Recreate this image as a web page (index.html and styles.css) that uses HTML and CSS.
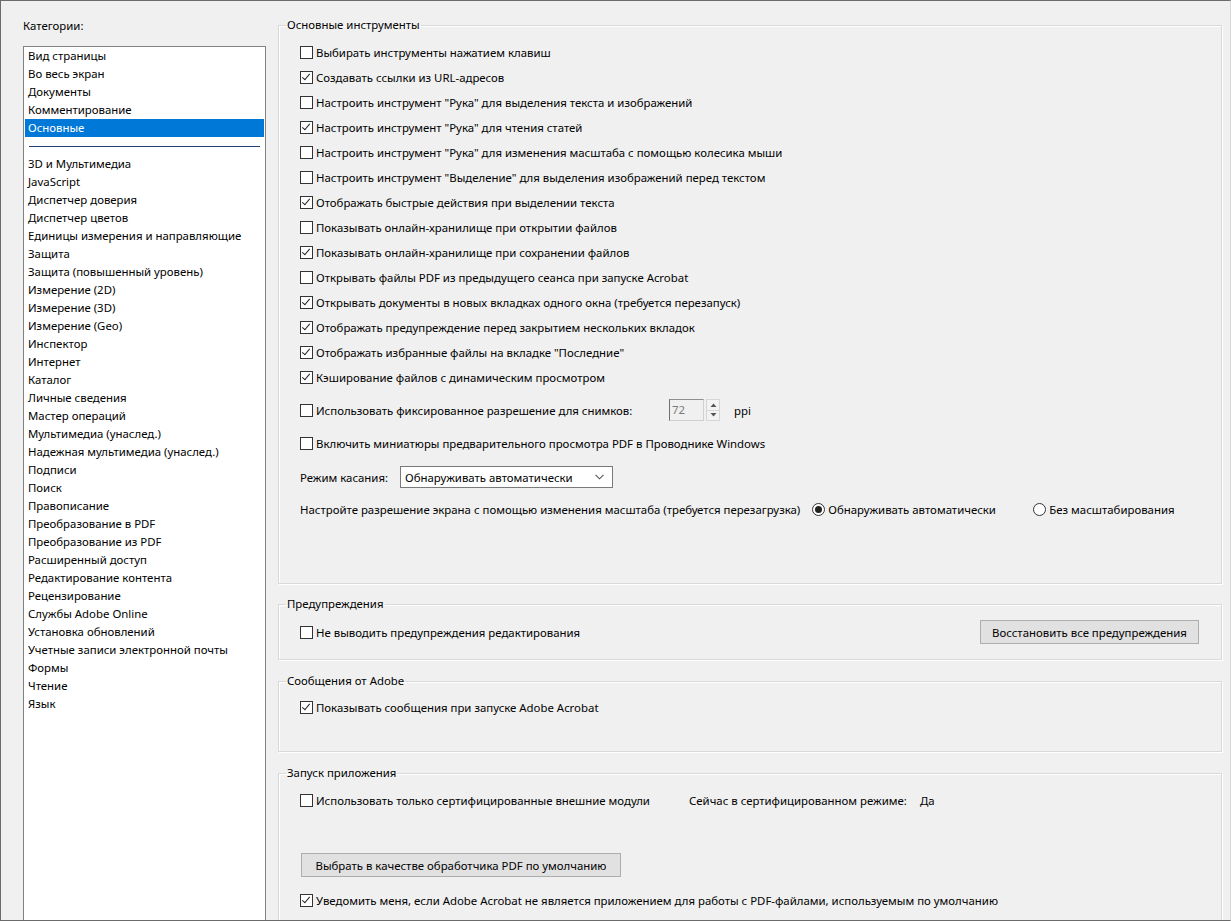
FILE: index.html
```html
<!DOCTYPE html>
<html lang="ru">

<head>
  <meta charset="UTF-8">
  <meta name="viewport" content="width=device-width, initial-scale=1.0">
  <title>Установки</title>
  <link rel="stylesheet" href="styles.css">
</head>

<body>
  <div class="window">
    <div class="sidebar">
      <div class="cat-title">Категории:</div>
      <ul class="cat-list">
        <li>Вид страницы</li>
        <li>Во весь экран</li>
        <li>Документы</li>
        <li>Комментирование</li>
        <li class="selected">Основные</li>
        <li class="sep"></li>
        <li>3D и Мультимедиа</li>
        <li>JavaScript</li>
        <li>Диспетчер доверия</li>
        <li>Диспетчер цветов</li>
        <li>Единицы измерения и направляющие</li>
        <li>Защита</li>
        <li>Защита (повышенный уровень)</li>
        <li>Измерение (2D)</li>
        <li>Измерение (3D)</li>
        <li>Измерение (Geo)</li>
        <li>Инспектор</li>
        <li>Интернет</li>
        <li>Каталог</li>
        <li>Личные сведения</li>
        <li>Мастер операций</li>
        <li>Мультимедиа (унаслед.)</li>
        <li>Надежная мультимедиа (унаслед.)</li>
        <li>Подписи</li>
        <li>Поиск</li>
        <li>Правописание</li>
        <li>Преобразование в PDF</li>
        <li>Преобразование из PDF</li>
        <li>Расширенный доступ</li>
        <li>Редактирование контента</li>
        <li>Рецензирование</li>
        <li>Службы Adobe Online</li>
        <li>Установка обновлений</li>
        <li>Учетные записи электронной почты</li>
        <li>Формы</li>
        <li>Чтение</li>
        <li>Язык</li>
      </ul>
    </div>

    <div class="main">
      <fieldset class="group">
        <legend>Основные инструменты</legend>
        <div class="group-body body-tools">
          <div class="row"><span class="cb"></span>Выбирать инструменты нажатием клавиш</div>
          <div class="row"><span class="cb on"></span>Создавать ссылки из URL-адресов</div>
          <div class="row"><span class="cb"></span>Настроить инструмент "Рука" для выделения текста и изображений</div>
          <div class="row"><span class="cb on"></span>Настроить инструмент "Рука" для чтения статей</div>
          <div class="row"><span class="cb"></span>Настроить инструмент "Рука" для изменения масштаба с помощью колесика мыши</div>
          <div class="row"><span class="cb"></span>Настроить инструмент "Выделение" для выделения изображений перед текстом</div>
          <div class="row"><span class="cb on"></span>Отображать быстрые действия при выделении текста</div>
          <div class="row"><span class="cb"></span>Показывать онлайн-хранилище при открытии файлов</div>
          <div class="row"><span class="cb on"></span>Показывать онлайн-хранилище при сохранении файлов</div>
          <div class="row"><span class="cb"></span>Открывать файлы PDF из предыдущего сеанса при запуске Acrobat</div>
          <div class="row"><span class="cb on"></span>Открывать документы в новых вкладках одного окна (требуется перезапуск)</div>
          <div class="row"><span class="cb on"></span>Отображать предупреждение перед закрытием нескольких вкладок</div>
          <div class="row"><span class="cb on"></span>Отображать избранные файлы на вкладке "Последние"</div>
          <div class="row"><span class="cb on"></span>Кэширование файлов с динамическим просмотром</div>

          <div class="row row-tall row-ppi">
            <span class="cb"></span><span class="ppi-label">Использовать фиксированное разрешение для снимков:</span>
            <span class="spin-input">72</span>
            <span class="spin-btns">
              <span class="spin-btn"><svg width="7" height="4" viewBox="0 0 7 4"><path d="M0.5 4 L3.5 0.5 L6.5 4 Z" fill="#555"/></svg></span>
              <span class="spin-btn"><svg width="7" height="4" viewBox="0 0 7 4"><path d="M0.5 0 L3.5 3.5 L6.5 0 Z" fill="#555"/></svg></span>
            </span>
            <span class="ppi">ppi</span>
          </div>
          <div class="row row-tall row-thumbs"><span class="cb"></span>Включить миниатюры предварительного просмотра PDF в Проводнике Windows</div>
          <div class="row row-tall row-touch">
            <span class="touch-label">Режим касания:</span>
            <span class="select">
              <span class="select-text">Обнаруживать автоматически</span>
              <svg width="9" height="6" viewBox="0 0 9 6"><path d="M0.5 0.8 L4.5 4.8 L8.5 0.8" fill="none" stroke="#555" stroke-width="1.1"/></svg>
            </span>
          </div>
          <div class="row row-tall row-scale">
            <span class="scale-label">Настройте разрешение экрана с помощью изменения масштаба (требуется перезагрузка)</span>
            <span class="radio-opt radio-first"><span class="rb on"></span>Обнаруживать автоматически</span>
            <span class="radio-opt"><span class="rb"></span>Без масштабирования</span>
          </div>
        </div>
      </fieldset>

      <fieldset class="group group-warn">
        <legend>Предупреждения</legend>
        <div class="group-body body-warn">
          <div class="row row-split">
            <span class="row-left"><span class="cb"></span>Не выводить предупреждения редактирования</span>
            <button class="btn btn-restore">Восстановить все предупреждения</button>
          </div>
        </div>
      </fieldset>

      <fieldset class="group group-msg">
        <legend>Сообщения от Adobe</legend>
        <div class="group-body body-msg">
          <div class="row"><span class="cb on"></span>Показывать сообщения при запуске Adobe Acrobat</div>
        </div>
      </fieldset>

      <fieldset class="group group-launch">
        <legend>Запуск приложения</legend>
        <div class="group-body body-launch">
          <div class="row">
            <span class="cb"></span><span class="cert-label">Использовать только сертифицированные внешние модули</span>
            <span class="cert-mode">Сейчас в сертифицированном режиме:</span>
            <span>Да</span>
          </div>
          <button class="btn btn-default">Выбрать в качестве обработчика PDF по умолчанию</button>
          <div class="row row-notify"><span class="cb on"></span>Уведомить меня, если Adobe Acrobat не является приложением для работы с PDF-файлами, используемым по умолчанию</div>
        </div>
      </fieldset>
    </div>
  </div>
</body>

</html>
```

FILE: styles.css
```css
body {
  margin: 0;
  background-color: #f0f0f0;
  font-family: "Noto Sans", "Open Sans", sans-serif;
  font-size: 11.4px;
  color: #000;
}

.window {
  width: 1231px;
  height: 921px;
  box-sizing: border-box;
  border: 1px solid #6b6b6b;
  border-right-color: #d8d8d8;
  display: flex;
  overflow: hidden;
}

/* left column */
.sidebar {
  width: 243px;
  padding: 17px 0 0 22px;
  display: flex;
  flex-direction: column;
}

.cat-title {
  line-height: 16px;
}

.cat-list {
  flex: 1;
  list-style: none;
  margin: 12px 0 -1px 0;
  padding: 0 1px 1px 1px;
  background-color: #fff;
  border: 1px solid #828282;
}

.cat-list li {
  height: 18px;
  line-height: 18px;
  padding-left: 3px;
  white-space: nowrap;
}

.cat-list .selected {
  background-color: #0078d7;
  color: #fff;
}

.cat-list .sep {
  box-sizing: border-box;
  padding: 9px 4px 0 4px;
}

.cat-list .sep::after {
  content: "";
  display: block;
  border-top: 1px solid #24406e;
}

/* right column */
.main {
  margin-left: 12px;
  padding-top: 16px;
  width: 944px;
}

.group {
  margin: 0;
  padding: 0;
  border: 1px solid #d9d9d9;
  box-shadow: inset 1px 1px 0 #fff, 1px 1px 0 #fff;
  min-width: 0;
}

.group legend {
  margin-left: 7px;
  padding: 0 1px;
  line-height: 16px;
}

.group-body {
  box-sizing: border-box;
  padding-left: 21px;
  padding-right: 22px;
}

.body-tools {
  height: 550px;
  padding-top: 7px;
}

.group-warn {
  margin-top: 12px;
}

.body-warn {
  height: 47px;
  padding-top: 8px;
}

.group-msg {
  margin-top: 13px;
}

.body-msg {
  height: 62px;
  padding-top: 6px;
}

.group-launch {
  margin-top: 13px;
}

.body-launch {
  height: 200px;
  padding-top: 7px;
}

.row {
  height: 25px;
  display: flex;
  align-items: center;
  white-space: nowrap;
}

.row-tall {
  height: 24px;
}

.row-ppi {
  margin-top: 8px;
}

.row-thumbs {
  margin-top: 9px;
}

.row-touch {
  margin-top: 10px;
}

.row-scale {
  margin-top: 8px;
}

/* checkbox */
.cb {
  width: 11px;
  height: 11px;
  border: 1px solid #333;
  background-color: #fff;
  margin-right: 3px;
  flex-shrink: 0;
  position: relative;
}

.cb.on::after {
  content: "";
  position: absolute;
  left: 3px;
  top: 0px;
  width: 3px;
  height: 7px;
  border: solid #222;
  border-width: 0 1.3px 1.3px 0;
  transform: rotate(40deg);
}

/* radio */
.rb {
  width: 11px;
  height: 11px;
  border: 1px solid #333;
  border-radius: 50%;
  background-color: #fff;
  margin-right: 3px;
  position: relative;
}

.rb.on::after {
  content: "";
  position: absolute;
  left: 2px;
  top: 2px;
  width: 7px;
  height: 7px;
  border-radius: 50%;
  background-color: #222;
}

.radio-opt {
  display: flex;
  align-items: center;
}

.scale-label {
  margin-right: 12px;
}

.radio-first {
  width: 221px;
}

/* spinner */
.ppi-label {
  width: 353px;
}

.spin-input {
  width: 31px;
  height: 20px;
  line-height: 20px;
  padding-left: 2px;
  border: 1px solid #cfcfcf;
  border-left-color: #6f6f6f;
  border-top-color: #8f8f8f;
  background-color: #f0f0f0;
  color: #7a7a7a;
}

.spin-btns {
  display: flex;
  flex-direction: column;
  margin-left: 2px;
  width: 14px;
  height: 22px;
  box-sizing: border-box;
  border: 1px solid #d6d6d6;
}

.spin-btn {
  flex: 1;
  display: flex;
  align-items: center;
  justify-content: center;
  background-color: #f3f3f3;
}

.spin-btn + .spin-btn {
  border-top: 1px solid #d6d6d6;
}

.ppi {
  margin-left: 14px;
}

/* select */
.touch-label {
  width: 100px;
}

.select {
  width: 213px;
  height: 22px;
  box-sizing: border-box;
  border: 1px solid #7a7a7a;
  background-color: #fff;
  display: flex;
  align-items: center;
  justify-content: space-between;
  padding: 0 8px 0 4px;
}

/* buttons */
.btn {
  height: 24px;
  box-sizing: border-box;
  border: 1px solid #adadad;
  background-color: #e1e1e1;
  font-family: inherit;
  font-size: 11.4px;
  color: #000;
  padding: 0;
}

.row-split {
  justify-content: space-between;
  height: 24px;
}

.row-left {
  display: flex;
  align-items: center;
}

.btn-restore {
  width: 219px;
}

.btn-default {
  display: block;
  width: 320px;
  margin-top: 40px;
  margin-left: 1px;
}

.cert-label {
  width: 373px;
}

.cert-mode {
  width: 231px;
}

.row-notify {
  height: 24px;
  margin-top: 11px;
}
```
